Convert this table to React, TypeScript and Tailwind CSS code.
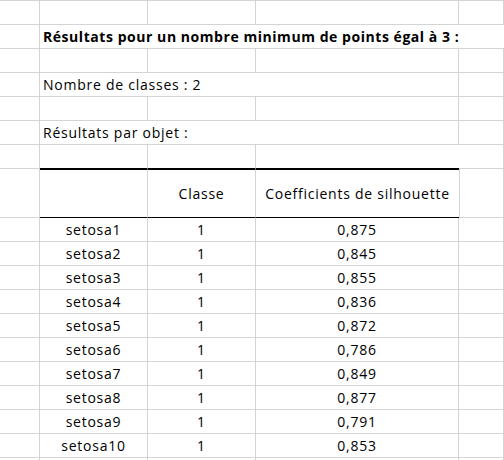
const rows = [
  ["setosa1", "1", "0,875"],
  ["setosa2", "1", "0,845"],
  ["setosa3", "1", "0,855"],
  ["setosa4", "1", "0,836"],
  ["setosa5", "1", "0,872"],
  ["setosa6", "1", "0,786"],
  ["setosa7", "1", "0,849"],
  ["setosa8", "1", "0,877"],
  ["setosa9", "1", "0,791"],
  ["setosa10", "1", "0,853"],
];

const g = "border-r border-b border-[#d4d4d4]";

const Blank = () => <div className={`h-[24px] ${g}`} />;

const App = () => {
  return (
    <div
      className="w-[504px] h-[460px] overflow-hidden bg-white text-black text-[14px] leading-none tracking-[0.75px]"
      style={{ fontFamily: "'Open Sans', 'Noto Sans', sans-serif" }}
    >
      <div className="grid grid-cols-[40px_108px_108px_203px_1fr] border-t border-[#d4d4d4]">
        {/* row 1 */}
        <Blank /><Blank /><Blank /><Blank /><Blank />

        {/* row 2 : titre */}
        <Blank />
        <div className="col-span-4 h-[24px] border-b border-[#d4d4d4] flex items-end pb-[4px] pl-[3px] font-bold tracking-[0.55px] whitespace-nowrap">
          Résultats pour un nombre minimum de points égal à 3 :
        </div>

        {/* row 3 */}
        <Blank /><Blank /><Blank /><Blank /><Blank />

        {/* row 4 */}
        <Blank />
        <div className={`col-span-3 h-[24px] ${g} flex items-end pb-[4px] pl-[3px] whitespace-nowrap`}>
          Nombre de classes : 2
        </div>
        <Blank />

        {/* row 5 */}
        <Blank /><Blank /><Blank /><Blank /><Blank />

        {/* row 6 */}
        <Blank />
        <div className={`col-span-3 h-[24px] ${g} flex items-end pb-[4px] pl-[3px] whitespace-nowrap`}>
          Résultats par objet :
        </div>
        <Blank />

        {/* row 7 */}
        <Blank />
        <div className="h-[24px] border-r border-b border-r-[#d4d4d4] border-b-black" />
        <div className="h-[24px] border-r border-b border-r-[#d4d4d4] border-b-black" />
        <div className="h-[24px] border-b border-b-black" />
        <div className={`h-[24px] ${g}`} />

        {/* en-tête */}
        <div className={`h-[49px] ${g}`} />
        <div className="h-[49px] border-t border-b border-r border-t-black border-b-black border-r-[#d4d4d4]" />
        <div className="h-[49px] border-t border-b border-r border-t-black border-b-black border-r-[#d4d4d4] flex items-center justify-center pt-[1px]">
          Classe
        </div>
        <div className="h-[49px] border-t border-b border-t-black border-b-black flex items-center justify-center pt-[1px] whitespace-nowrap">
          Coefficients de silhouette
        </div>
        <div className={`h-[49px] border-l border-l-[#d4d4d4] ${g}`} />

        {rows.map(([name, cls, coef]) => (
          <div key={name} className="contents">
            <Blank />
            <div className={`h-[24px] ${g} flex items-end justify-center pb-[4px]`}>{name}</div>
            <div className={`h-[24px] ${g} flex items-end justify-center pb-[4px]`}>{cls}</div>
            <div className={`h-[24px] ${g} flex items-end justify-center pb-[4px]`}>{coef}</div>
            <Blank />
          </div>
        ))}

        <Blank /><Blank /><Blank /><Blank /><Blank />
      </div>
    </div>
  );
};

export default App;
